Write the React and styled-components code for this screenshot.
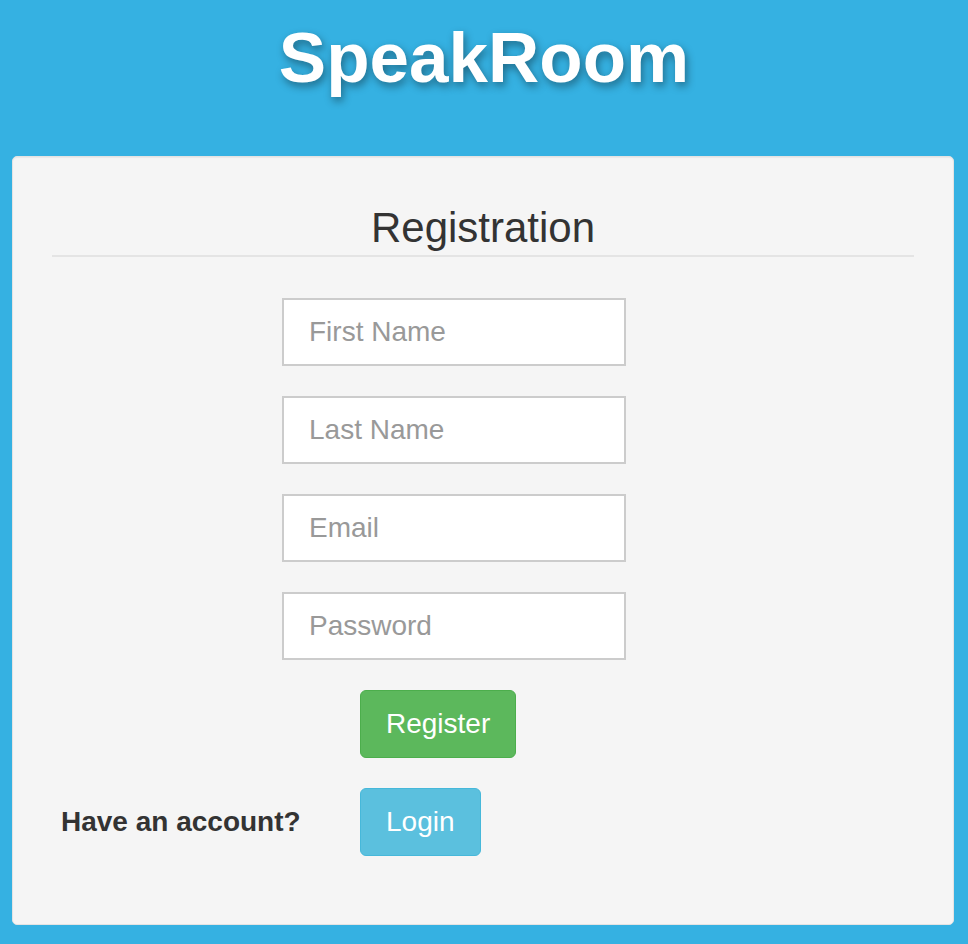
import React from 'react'
import styled, { createGlobalStyle } from 'styled-components'

const GlobalStyle = createGlobalStyle`
  html, body {
    margin: 0;
    padding: 0;
    background: #35b1e2;
    font-family: 'Liberation Sans', Helvetica, Arial, sans-serif;
  }
  * {
    box-sizing: border-box;
  }
`

const App = () => (
  <Page>
    <GlobalStyle />
    <Header>
      <Title>SpeakRoom</Title>
    </Header>
    <Well>
      <Legend>Registration</Legend>
      <Form onSubmit={e => e.preventDefault()}>
        <Fields>
          <Input type="text" placeholder="First Name" />
          <Input type="text" placeholder="Last Name" />
          <Input type="email" placeholder="Email" />
          <Input type="password" placeholder="Password" />
        </Fields>
        <ButtonRow>
          <span />
          <div>
            <Button type="submit" variant="success">Register</Button>
          </div>
        </ButtonRow>
        <ButtonRow>
          <Label>Have an account?</Label>
          <div>
            <Button type="button" variant="info">Login</Button>
          </div>
        </ButtonRow>
      </Form>
    </Well>
  </Page>
)

const Page = styled.div`
  min-height: 100vh;
  padding-bottom: 19px;
`

const Header = styled.header`
  padding: 22px 0 63px;
  text-align: center;
`

const Title = styled.h1`
  margin: 0;
  font-size: 71px;
  line-height: 71px;
  font-weight: 700;
  color: #fff;
  text-shadow: 2px 4px 8px rgba(0, 0, 0, 0.4);
`

const Well = styled.section`
  margin: 0 14px 0 12px;
  padding: 48px 39px 68px;
  background: #f5f5f5;
  border: 1px solid #e3e3e3;
  border-radius: 5px;
  box-shadow: inset 0 1px 1px rgba(0, 0, 0, 0.05);
`

const Legend = styled.h2`
  margin: 0;
  padding-bottom: 4px;
  font-size: 42px;
  line-height: 46px;
  font-weight: 400;
  color: #333;
  text-align: center;
  border-bottom: 2px solid #e4e4e4;
`

const Form = styled.form`
  display: flex;
  flex-direction: column;
  gap: 30px;
  margin-top: 41px;
`

const Fields = styled.div`
  display: flex;
  flex-direction: column;
  gap: 30px;
  padding-left: 230px;
`

const Input = styled.input`
  width: 344px;
  height: 68px;
  padding: 0 25px;
  font-family: inherit;
  font-size: 28px;
  color: #555;
  background: #fff;
  border: 2px solid #ccc;
  border-radius: 0;
  outline: none;
  &::placeholder {
    color: #999;
  }
`

const ButtonRow = styled.div`
  display: grid;
  grid-template-columns: 308px auto;
  align-items: center;
`

const Label = styled.span`
  padding-left: 9px;
  font-size: 28px;
  font-weight: 700;
  color: #333;
`

const Button = styled.button`
  height: 68px;
  padding: 0 25px;
  font-family: inherit;
  font-size: 28px;
  color: #fff;
  border-radius: 6px;
  cursor: pointer;
  background: ${p => (p.variant === 'success' ? '#5cb85c' : '#5bc0de')};
  border: 1px solid ${p => (p.variant === 'success' ? '#4cae4c' : '#46b8da')};
`

export default App
